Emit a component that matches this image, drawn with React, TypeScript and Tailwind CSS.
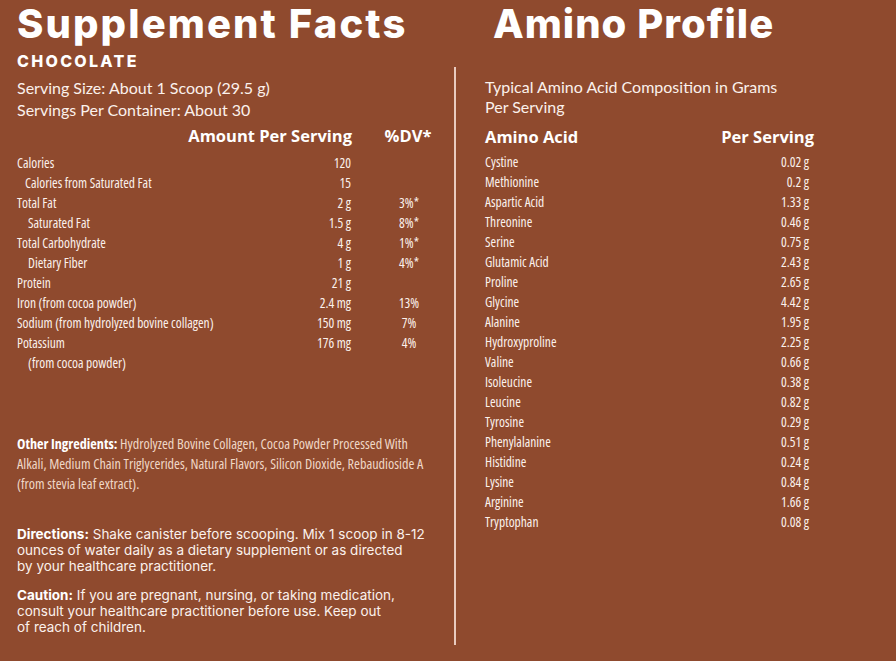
const nutrients = [
  { label: "Calories", amount: "120", dv: "", indent: "" },
  { label: "Calories from Saturated Fat", amount: "15", dv: "", indent: "pl-[8px]" },
  { label: "Total Fat", amount: "2 g", dv: "3%*", indent: "" },
  { label: "Saturated Fat", amount: "1.5 g", dv: "8%*", indent: "pl-[11px]" },
  { label: "Total Carbohydrate", amount: "4 g", dv: "1%*", indent: "" },
  { label: "Dietary Fiber", amount: "1 g", dv: "4%*", indent: "pl-[11px]" },
  { label: "Protein", amount: "21 g", dv: "", indent: "" },
  { label: "Iron (from cocoa powder)", amount: "2.4 mg", dv: "13%", indent: "" },
  { label: "Sodium (from hydrolyzed bovine collagen)", amount: "150 mg", dv: "7%", indent: "" },
  { label: "Potassium", amount: "176 mg", dv: "4%", indent: "" },
  { label: "(from cocoa powder)", amount: "", dv: "", indent: "pl-[11px]" },
];

const aminos = [
  ["Cystine", "0.02 g"],
  ["Methionine", "0.2 g"],
  ["Aspartic Acid", "1.33 g"],
  ["Threonine", "0.46 g"],
  ["Serine", "0.75 g"],
  ["Glutamic Acid", "2.43 g"],
  ["Proline", "2.65 g"],
  ["Glycine", "4.42 g"],
  ["Alanine", "1.95 g"],
  ["Hydroxyproline", "2.25 g"],
  ["Valine", "0.66 g"],
  ["Isoleucine", "0.38 g"],
  ["Leucine", "0.82 g"],
  ["Tyrosine", "0.29 g"],
  ["Phenylalanine", "0.51 g"],
  ["Histidine", "0.24 g"],
  ["Lysine", "0.84 g"],
  ["Arginine", "1.66 g"],
  ["Tryptophan", "0.08 g"],
];

const display = "font-['Inter',sans-serif]";
const narrow = "font-['Open_Sans',sans-serif] [font-stretch:75%]";
const heading = "font-['Open_Sans',sans-serif] [font-stretch:88%] font-bold text-white text-[16.5px] leading-[26px]";
const body = "font-['Lato',sans-serif]";

export default function App() {
  return (
    <div className="w-[896px] h-[661px] bg-[#8f4a2e] text-[#fbf1ec] flex overflow-hidden">
      {/* Supplement facts */}
      <div className="w-[454px] shrink-0 pl-[17px]">
        <h1 className={`${display} font-extrabold text-white text-[40px] leading-[48px] tracking-[2.1px] whitespace-nowrap`}>
          Supplement Facts
        </h1>
        <p className={`${display} font-extrabold text-white text-[16px] leading-[16px] mt-[5px] tracking-[2.3px]`}>
          CHOCOLATE
        </p>
        <div className={`${body} text-[16px] leading-[22px] mt-[8px]`}>
          <p>Serving Size: About 1 Scoop (29.5 g)</p>
          <p>Servings Per Container: About 30</p>
        </div>
        <div className={`${heading} flex mt-[2px]`}>
          <div className="w-[335px] shrink-0 text-right">Amount Per Serving</div>
          <div className="w-[80px] shrink-0 ml-[16px] text-center">%DV*</div>
        </div>
        <div className={`${narrow} font-medium text-[13.5px] mt-[4px]`}>
          {nutrients.map((n) => (
            <div key={n.label} className="flex h-[20px] leading-[20px]">
              <div className="w-[334px] shrink-0 flex justify-between">
                <span className={n.indent}>{n.label}</span>
                <span>{n.amount}</span>
              </div>
              <div className="w-[86px] shrink-0 ml-[15px] text-center">{n.dv}</div>
            </div>
          ))}
        </div>

        <p className={`${narrow} text-[14.2px] leading-[20px] text-[#efd7c6] mt-[61px] whitespace-nowrap`}>
          <span className="font-bold text-white">Other Ingredients:</span> Hydrolyzed Bovine Collagen, Cocoa Powder Processed With
          <br />
          Alkali, Medium Chain Triglycerides, Natural Flavors, Silicon Dioxide, Rebaudioside A
          <br />
          (from stevia leaf extract).
        </p>

        <p className={`${display} text-[13.5px] leading-[16px] mt-[32px] whitespace-nowrap`}>
          <span className="font-bold text-white">Directions:</span> Shake canister before scooping. Mix 1 scoop in 8-12
          <br />
          ounces of water daily as a dietary supplement or as directed
          <br />
          by your healthcare practitioner.
        </p>
        <p className={`${display} text-[13.5px] leading-[16px] mt-[13px] whitespace-nowrap`}>
          <span className="font-bold text-white">Caution:</span> If you are pregnant, nursing, or taking medication,
          <br />
          consult your healthcare practitioner before use. Keep out
          <br />
          of reach of children.
        </p>
      </div>

      {/* Amino profile */}
      <div className="flex-1 flex flex-col">
        <h2 className={`${display} font-extrabold text-white text-[40px] leading-[48px] ml-[39px] tracking-[1px] whitespace-nowrap`}>
          Amino Profile
        </h2>
        <div className="mt-[19px] h-[578px] border-l-2 border-[#e9cbbf] pl-[29px]">
          <p className={`${body} text-[16px] leading-[20px] mt-[10px]`}>
            Typical Amino Acid Composition in Grams
            <br />
            Per Serving
          </p>
          <div className={`${heading} flex justify-between w-[329px] mt-[7px]`}>
            <span>Amino Acid</span>
            <span>Per Serving</span>
          </div>
          <div className={`${narrow} font-medium text-[13.5px] mt-[2px] w-[324px]`}>
            {aminos.map(([name, value]) => (
              <div key={name} className="flex justify-between h-[20px] leading-[20px]">
                <span>{name}</span>
                <span>{value}</span>
              </div>
            ))}
          </div>
        </div>
      </div>
    </div>
  );
}
